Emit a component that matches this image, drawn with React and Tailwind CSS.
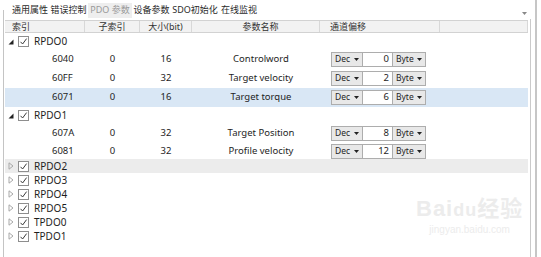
import React from "react";

const font = { fontFamily: '"Noto Sans", "Noto Sans CJK SC", sans-serif' };

const Check = () => (
  <span className="flex h-[11px] w-[11px] items-center justify-center border border-[#8e8e8e] bg-white">
    <svg width="9" height="9" viewBox="0 0 9 9">
      <path d="M1.5 4.8 L3.6 7 L7.6 1.6" fill="none" stroke="#3a3a3a" strokeWidth="1" />
    </svg>
  </span>
);

const Arrow = ({ color = "#222" }) => (
  <svg width="5" height="3" viewBox="0 0 5 3">
    <path d="M0 0 L5 0 L2.5 3 Z" fill={color} />
  </svg>
);

const Toggle = ({ open }) =>
  open ? (
    <svg width="6" height="6" viewBox="0 0 6 6">
      <path d="M5.5 0.5 L5.5 5.5 L0.5 5.5 Z" fill="#222" />
    </svg>
  ) : (
    <svg width="6" height="8" viewBox="0 0 6 8">
      <path d="M1 0.8 L5 4 L1 7.2 Z" fill="none" stroke="#a8a8a8" strokeWidth="1" />
    </svg>
  );

const Group = ({ name, open, h, bg }) => (
  <div className={`flex items-center ${h} ${bg || ""}`}>
    <span className="ml-[2px] flex w-[8px] items-center justify-center">
      <Toggle open={open} />
    </span>
    <span className="ml-[3px]">
      <Check />
    </span>
    <span className="ml-[5px] whitespace-nowrap text-[10px] text-[#1e1e1e]">{name}</span>
  </div>
);

const Child = ({ idx, sub, size, name, off, hl, h }) => (
  <div
    className={`grid grid-cols-[80px_55px_52px_128px_120px_88px] items-center whitespace-nowrap text-[9.5px] text-[#1e1e1e] ${h} ${
      hl ? "bg-[#d9e7f5]" : ""
    }`}
  >
    <span className="pl-[47px]">{idx}</span>
    <span className="text-center">{sub}</span>
    <span className="text-center">{size}</span>
    <span className="pl-[10px] text-center">{name}</span>
    <span className="flex items-center pl-[11px] text-[8.5px]">
      <span className="flex h-[15px] w-[32px] items-center justify-between border border-[#adadad] bg-[#e8e8e8] pl-[3px] pr-[3px]">
        <span>Dec</span>
        <Arrow />
      </span>
      <span className="flex h-[15px] w-[29px] items-center justify-end border-y border-[#adadad] bg-white pr-[3px] text-[9.5px]">
        {off}
      </span>
      <span className="flex h-[15px] w-[34px] items-center justify-between border border-[#adadad] bg-[#e8e8e8] pl-[3px] pr-[3px]">
        <span>Byte</span>
        <Arrow />
      </span>
    </span>
    <span />
  </div>
);

export default function App() {
  const tabs = [
    ["通用属性", "w-[38px]"],
    ["错误控制", "w-[39px]"],
    ["PDO 参数", "w-[44px]"],
    ["设备参数", "w-[39px]"],
    ["SDO初始化", "w-[48px]"],
    ["在线监视", "w-[40px]"],
  ];
  return (
    <div className="relative flex h-[257px] w-[541px] overflow-hidden bg-white" style={font}>
      <div className="ml-[3px] mt-[10px] w-[1px] bg-[#c4c4c4]" />
      <div className="ml-[1px] flex w-[523px] flex-col">
        <div className="flex h-[20px] items-center pl-[6px] text-[9px] text-[#2a2a2a]">
          {tabs.map(([t, w], i) => (
            <span
              key={t}
              className={`${w} flex h-[15px] items-center justify-center whitespace-nowrap ${
                i === 2 ? "bg-[#eeeeee] text-[#9a9a9a]" : ""
              }`}
            >
              {t}
            </span>
          ))}
          <span className="ml-auto mr-[1px] mt-[6px]">
            <Arrow color="#888" />
          </span>
        </div>
        <div className="grid h-[13px] grid-cols-[80px_55px_52px_128px_120px_88px] items-center border-y border-[#d2d2d2] bg-[#f2f2f2] text-[9px] leading-none text-[#333]">
          <span className="h-full border-r border-[#d8d8d8] pl-[7px] leading-[11px]">索引</span>
          <span className="h-full border-r border-[#d8d8d8] text-center leading-[11px]">子索引</span>
          <span className="h-full whitespace-nowrap border-r border-[#d8d8d8] text-center leading-[11px]">大小(bit)</span>
          <span className="h-full border-r border-[#d8d8d8] pl-[10px] text-center leading-[11px]">参数名称</span>
          <span className="h-full border-r border-[#d8d8d8] pl-[10px] leading-[11px]">通道偏移</span>
          <span className="h-full border-r border-[#d8d8d8]" />
        </div>
        <Group name="RPDO0" open h="h-[17px]" />
        <Child idx="6040" sub="0" size="16" name="Controlword" off="0" h="h-[19px]" />
        <Child idx="60FF" sub="0" size="32" name="Target velocity" off="2" h="h-[19px]" />
        <Child idx="6071" sub="0" size="16" name="Target torque" off="6" hl h="h-[19px]" />
        <Group name="RPDO1" open h="h-[17px]" />
        <Child idx="607A" sub="0" size="32" name="Target Position" off="8" h="h-[19px]" />
        <Child idx="6081" sub="0" size="32" name="Profile velocity" off="12" h="h-[16px]" />
        <Group name="RPDO2" h="h-[14px]" bg="bg-[#ececec]" />
        <Group name="RPDO3" h="h-[14px]" />
        <Group name="RPDO4" h="h-[14px]" />
        <Group name="RPDO5" h="h-[14px]" />
        <Group name="TPDO0" h="h-[14px]" />
        <Group name="TPDO1" h="h-[14px]" />
      </div>
      <div className="ml-[2px] mt-[19px] w-[1px] bg-[#cacaca]" />
      <div className="ml-[4px] w-[2px] bg-[#c6c6c6]" />
      <div className="pointer-events-none absolute left-[416px] top-[198px] flex flex-col items-center leading-none text-[#ececec]">
        <span className="text-[22px] font-bold tracking-[1px]" style={{ fontFamily: '"Liberation Sans", "Noto Sans CJK SC", sans-serif' }}>
          Bai<span className="text-[18px]">du</span>经验
        </span>
        <span className="mt-[5px] text-[10px]" style={{ fontFamily: '"Liberation Sans", sans-serif' }}>
          jingyan.baidu.com
        </span>
      </div>
    </div>
  );
}
